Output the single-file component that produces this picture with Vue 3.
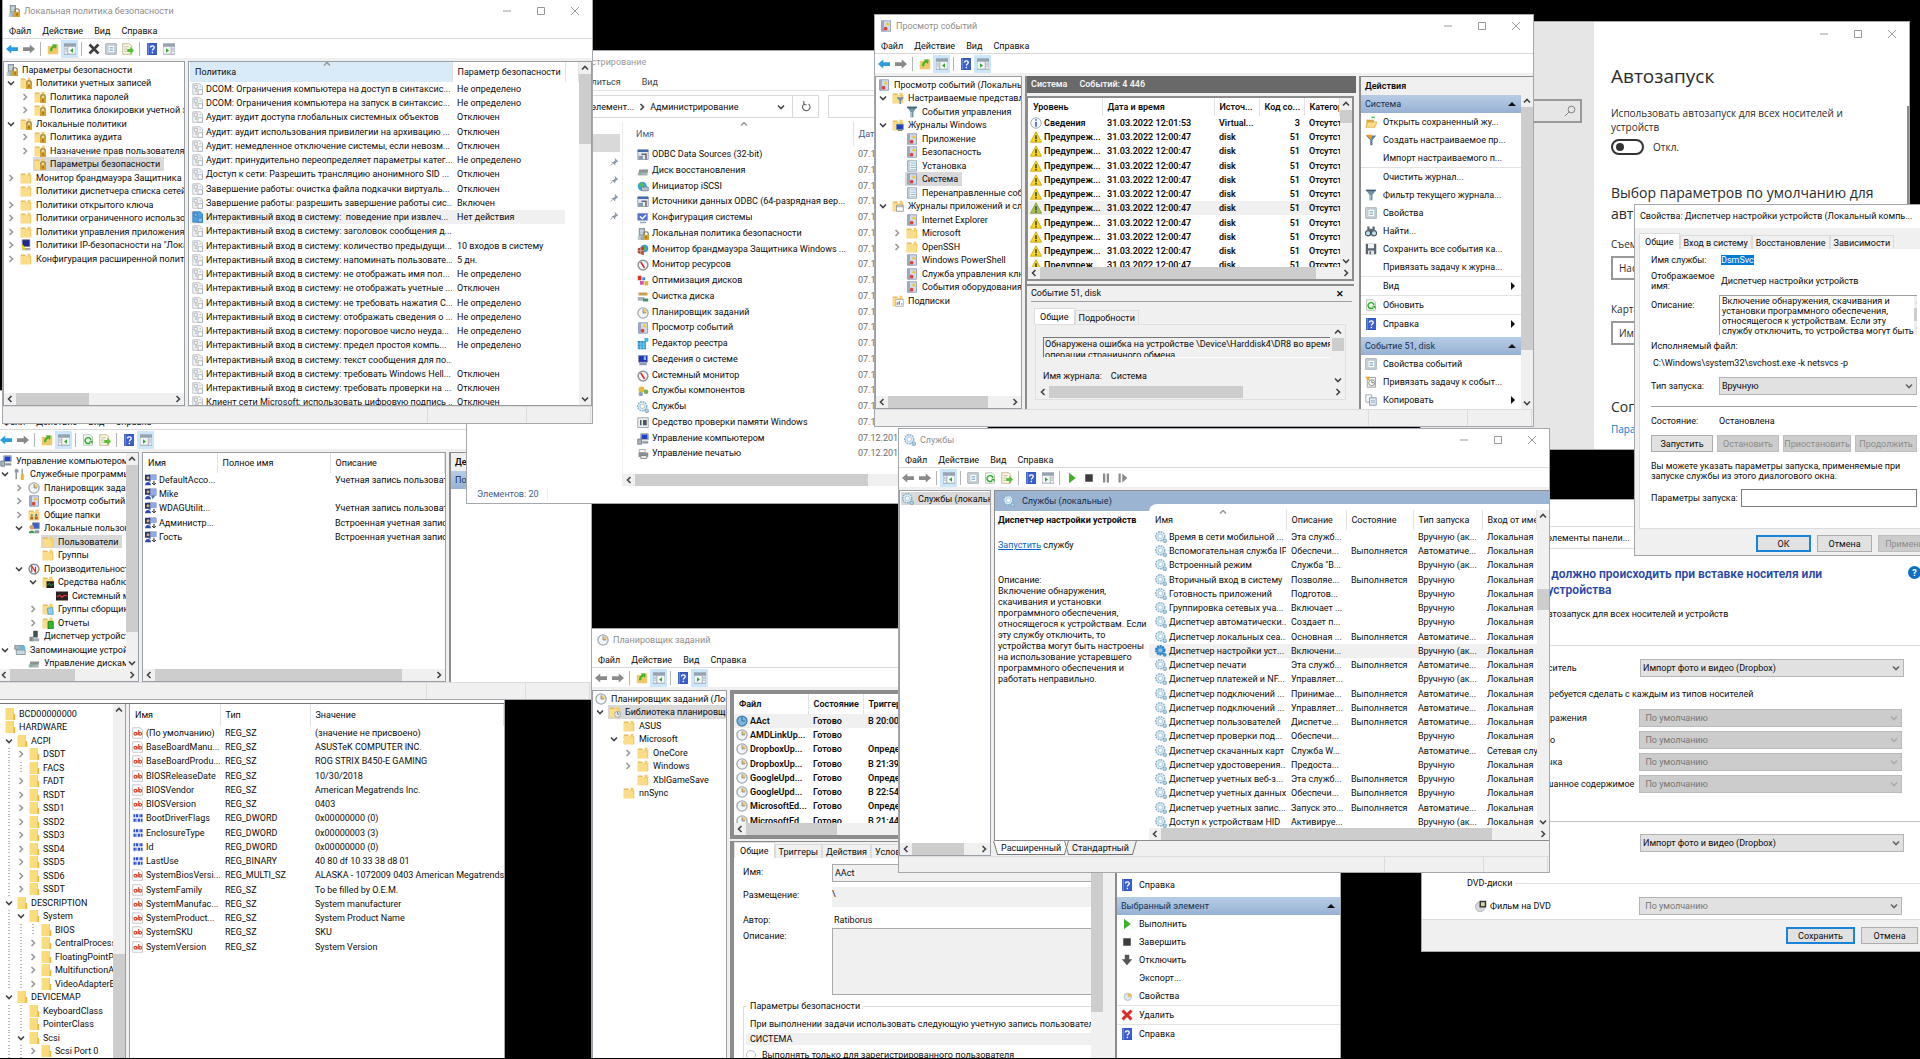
<script setup>
const menu = ['Файл', 'Действие', 'Вид', 'Справка']

// tree rows: [level, icon, text, state] — state: v open, > closed, * selected
const consoles = [
  {
    id: 'computer', title: 'Управление компьютером', icon: 'computer', blue: true,
    tools: ['back', 'fwd', '|', 'up', 'panel*', '|', 'refresh', 'export', '|', 'help', 'panelr*'],
    hthumb: 65, vbar: true,
    tree: [
      [0, 'computer', 'Управление компьютером'],
      [1, 'tools', 'Служебные программы', 'v'],
      [2, 'clock', 'Планировщик заданий', '>'],
      [2, 'log', 'Просмотр событий', '>'],
      [2, 'shared', 'Общие папки', '>'],
      [2, 'users', 'Локальные пользователи', 'v'],
      [3, 'folder', 'Пользователи', '*'],
      [3, 'folder', 'Группы'],
      [2, 'perf', 'Производительность', 'v'],
      [3, 'fmon', 'Средства наблюдения', 'v'],
      [4, 'sysmon', 'Системный монитор'],
      [3, 'fblue', 'Группы сборщиков', '>'],
      [3, 'fgreen', 'Отчеты', '>'],
      [2, 'device', 'Диспетчер устройств'],
      [1, 'storage', 'Запоминающие устройства', 'v'],
      [2, 'disk', 'Управление дисками']
    ]
  },
  {
    id: 'policy', title: 'Локальная политика безопасности', icon: 'server', blue: true, caption: true,
    tools: ['back', 'fwd', '|', 'up', 'panel*', '|', 'cross', 'props', 'export', '|', 'help', 'panelr'],
    hthumb: 73,
    tree: [
      [0, 'server', 'Параметры безопасности'],
      [1, 'flock', 'Политики учетных записей', 'v'],
      [2, 'flock', 'Политика паролей', '>'],
      [2, 'flock', 'Политика блокировки учетной записи', '>'],
      [1, 'flock', 'Локальные политики', 'v'],
      [2, 'flock', 'Политика аудита', '>'],
      [2, 'flock', 'Назначение прав пользователя', '>'],
      [2, 'flock', 'Параметры безопасности', '*'],
      [1, 'folder', 'Монитор брандмауэра Защитника Windows', '>'],
      [1, 'folder', 'Политики диспетчера списка сетей'],
      [1, 'folder', 'Политики открытого ключа', '>'],
      [1, 'folder', 'Политики ограниченного использования', '>'],
      [1, 'folder', 'Политики управления приложениями', '>'],
      [1, 'ipsec', 'Политики IP-безопасности на "Локальный', '>'],
      [1, 'folder', 'Конфигурация расширенной политики', '>']
    ]
  },
  {
    id: 'scheduler', title: 'Планировщик заданий', icon: 'clock',
    tools: ['back', 'fwd', '|', 'up', 'panel*', '|', 'help', 'panelr*'],
    tree: [
      [0, 'clock', 'Планировщик заданий (Локальный)'],
      [1, 'fclock', 'Библиотека планировщика', 'v*'],
      [2, 'folder', 'ASUS'],
      [2, 'folder', 'Microsoft', 'v'],
      [3, 'folder', 'OneCore', '>'],
      [3, 'folder', 'Windows', '>'],
      [3, 'folder', 'XblGameSave'],
      [2, 'folder', 'nnSync']
    ]
  },
  {
    id: 'events', title: 'Просмотр событий', icon: 'log', blue: true, caption: true,
    tools: ['back', 'fwd', '|', 'up', 'panel*', '|', 'help', 'panelr*'],
    hthumb: 100,
    tree: [
      [0, 'log', 'Просмотр событий (Локальный)'],
      [1, 'ffunnel', 'Настраиваемые представления', 'v'],
      [2, 'funnel', 'События управления'],
      [1, 'fwin', 'Журналы Windows', 'v'],
      [2, 'log', 'Приложение'],
      [2, 'log', 'Безопасность'],
      [2, 'logp', 'Установка'],
      [2, 'log', 'Система', '*'],
      [2, 'logp', 'Перенаправленные события'],
      [1, 'fpage', 'Журналы приложений и служб', 'v'],
      [2, 'log', 'Internet Explorer'],
      [2, 'folder', 'Microsoft', '>'],
      [2, 'folder', 'OpenSSH', '>'],
      [2, 'log', 'Windows PowerShell'],
      [2, 'log', 'Служба управления ключами'],
      [2, 'log', 'События оборудования'],
      [1, 'fsub', 'Подписки']
    ]
  },
  {
    id: 'services', title: 'Службы', icon: 'gear', caption: true,
    tools: ['back', 'fwd', '|', 'panel*', '|', 'props', 'refresh', 'export', '|', 'help', 'panelr', '|', 'play', 'stop', 'pause', 'restart'],
    hthumb: 52,
    tree: [[0, 'gear', 'Службы (локальные)', '*']]
  }
]

const login = 'Интерактивный вход в систему: '
const policies = [
  ['DCOM: Ограничения компьютера на доступ в синтаксис...', 'Не определено'],
  ['DCOM: Ограничения компьютера на запуск в синтаксис...', 'Не определено'],
  ['Аудит: аудит доступа глобальных системных объектов', 'Отключен'],
  ['Аудит: аудит использования привилегии на архивацию ...', 'Отключен'],
  ['Аудит: немедленное отключение системы, если невозм...', 'Отключен'],
  ['Аудит: принудительно переопределяет параметры катег...', 'Не определено'],
  ['Доступ к сети: Разрешить трансляцию анонимного SID ...', 'Отключен'],
  ['Завершение работы: очистка файла подкачки виртуаль...', 'Отключен'],
  ['Завершение работы: разрешить завершение работы сис...', 'Включен'],
  [login + '\u00a0поведение при извлеч...', 'Нет действия', true],
  [login + 'заголовок сообщения д...', ''],
  [login + 'количество предыдущи...', '10 входов в систему'],
  [login + 'напоминать пользовате...', '5 дн.'],
  [login + 'не отображать имя пол...', 'Не определено'],
  [login + 'не отображать учетные ...', 'Отключен'],
  [login + 'не требовать нажатия C...', 'Не определено'],
  [login + 'отображать сведения о ...', 'Не определено'],
  [login + 'пороговое число неуда...', 'Не определено'],
  [login + 'предел простоя компь...', 'Не определено'],
  [login + 'текст сообщения для по...', ''],
  [login + 'требовать Windows Hell...', 'Отключен'],
  [login + 'требовать проверки на ...', 'Отключен'],
  ['Клиент сети Microsoft: использовать цифровую подпись ...', 'Отключен']
]

const accounts = [
  ['userd', 'DefaultAcco...', 'Учетная запись пользователя'],
  ['user', 'Mike', ''],
  ['userd', 'WDAGUtilit...', 'Учетная запись пользователя'],
  ['userd', 'Администр...', 'Встроенная учетная запись'],
  ['userd', 'Гость', 'Встроенная учетная запись']
]

const adminTools = [
  ['odbc', 'ODBC Data Sources (32-bit)'],
  ['disk', 'Диск восстановления'],
  ['globe', 'Инициатор iSCSI'],
  ['odbc', 'Источники данных ODBC (64-разрядная вер...'],
  ['monitor', 'Конфигурация системы'],
  ['server', 'Локальная политика безопасности'],
  ['firewall', 'Монитор брандмауэра Защитника Windows ...'],
  ['gauge', 'Монитор ресурсов'],
  ['defrag', 'Оптимизация дисков'],
  ['clean', 'Очистка диска'],
  ['clock', 'Планировщик заданий'],
  ['log', 'Просмотр событий'],
  ['registry', 'Редактор реестра'],
  ['sysinfo', 'Сведения о системе'],
  ['gauge', 'Системный монитор'],
  ['parts', 'Службы компонентов'],
  ['gear', 'Службы'],
  ['memory', 'Средство проверки памяти Windows'],
  ['computer', 'Управление компьютером'],
  ['print', 'Управление печатью']
]

const events = [['info', 'Сведения', '31.03.2022 12:01:53', 'Virtual...', '3']]
for (let i = 1; i < 11; i++) {
  events.push([i === 6 ? 'warng' : 'warn', 'Предупреж...', '31.03.2022 12:00:47', 'disk', '51', i === 6])
}

const eventActions = [
  ['open', 'Открыть сохраненный жу...'],
  ['funnelo', 'Создать настраиваемое пр...'],
  ['', 'Импорт настраиваемого п...', 's'],
  ['', 'Очистить журнал...'],
  ['funnel', 'Фильтр текущего журнала...'],
  ['props', 'Свойства'],
  ['find', 'Найти...'],
  ['save', 'Сохранить все события ка...'],
  ['', 'Привязать задачу к журна...', 's'],
  ['', 'Вид', 's>'],
  ['refresh', 'Обновить', 's'],
  ['help', 'Справка', '>']
]
const diskActions = [
  ['props', 'Свойства событий'],
  ['task', 'Привязать задачу к событ...'],
  ['copy', 'Копировать', '>']
]
const taskActions = [
  ['play', 'Выполнить'],
  ['stop', 'Завершить'],
  ['down', 'Отключить'],
  ['', 'Экспорт...'],
  ['clockp', 'Свойства', 's'],
  ['redx', 'Удалить', 's'],
  ['help', 'Справка']
]

const R = 'Выполняется'
const L = 'Локальная'
const services = [
  ['Время в сети мобильной ...', 'Эта служб...', '', 'Вручную (ак...', L],
  ['Вспомогательная служба IP', 'Обеспечи...', R, 'Автоматиче...', L],
  ['Встроенный режим', 'Служба "В...', '', 'Вручную (ак...', L],
  ['Вторичный вход в систему', 'Позволяе...', R, 'Вручную', L],
  ['Готовность приложений', 'Подготов...', '', 'Вручную', L],
  ['Группировка сетевых уча...', 'Включает ...', '', 'Вручную', L],
  ['Диспетчер автоматически...', 'Создает п...', '', 'Вручную', L],
  ['Диспетчер локальных сеа...', 'Основная ...', R, 'Автоматиче...', L],
  ['Диспетчер настройки уст...', 'Включени...', '', 'Вручную (ак...', L, true],
  ['Диспетчер печати', 'Эта служб...', R, 'Автоматиче...', L],
  ['Диспетчер платежей и NF...', 'Управляет...', '', 'Вручную (ак...', L],
  ['Диспетчер подключений ...', 'Принимае...', R, 'Автоматиче...', L],
  ['Диспетчер подключений ...', 'Управляет...', R, 'Автоматиче...', L],
  ['Диспетчер пользователей', 'Диспетче...', R, 'Автоматиче...', L],
  ['Диспетчер проверки под...', 'Обеспечи...', '', 'Вручную', L],
  ['Диспетчер скачанных карт', 'Служба W...', '', 'Автоматиче...', 'Сетевая служба'],
  ['Диспетчер удостоверения...', 'Предоста...', '', 'Вручную', L],
  ['Диспетчер учетных веб-з...', 'Эта служб...', R, 'Вручную', L],
  ['Диспетчер учетных данных', 'Обеспечи...', R, 'Вручную', L],
  ['Диспетчер учетных запис...', 'Запуск это...', R, 'Автоматиче...', L],
  ['Доступ к устройствам HID', 'Активируе...', '', 'Вручную (ак...', L]
]

const tasks = [
  ['AAct', 'В 20:00', true],
  ['AMDLinkUp...', ''],
  ['DropboxUp...', 'Определено'],
  ['DropboxUp...', 'В 21:39'],
  ['GoogleUpd...', 'Определено'],
  ['GoogleUpd...', 'В 22:54'],
  ['MicrosoftEd...', 'Определено'],
  ['MicrosoftEd...', 'В 21:44']
]

const keys = [
  [0, 'BCD00000000'], [0, 'HARDWARE'], [1, 'ACPI', 'v'], [2, 'DSDT', '>'], [2, 'FACS'], [2, 'FADT', '>'],
  [2, 'RSDT', '>'], [2, 'SSD1', '>'], [2, 'SSD2', '>'], [2, 'SSD3', '>'], [2, 'SSD4', '>'], [2, 'SSD5', '>'],
  [2, 'SSD6', '>'], [2, 'SSDT', '>'], [1, 'DESCRIPTION', 'v'], [2, 'System', 'v'], [3, 'BIOS'],
  [3, 'CentralProcessor', '>'], [3, 'FloatingPointProcessor', '>'], [3, 'MultifunctionAdapter', '>'],
  [3, 'VideoAdapterBusses', '>'], [1, 'DEVICEMAP', 'v'], [2, 'KeyboardClass'], [2, 'PointerClass'],
  [2, 'Scsi', 'v'], [3, 'Scsi Port 0', '>']
]
const values = [
  ['(По умолчанию)', 'REG_SZ', '(значение не присвоено)'],
  ['BaseBoardManu...', 'REG_SZ', 'ASUSTeK COMPUTER INC.'],
  ['BaseBoardProdu...', 'REG_SZ', 'ROG STRIX B450-E GAMING'],
  ['BIOSReleaseDate', 'REG_SZ', '10/30/2018'],
  ['BIOSVendor', 'REG_SZ', 'American Megatrends Inc.'],
  ['BIOSVersion', 'REG_SZ', '0403'],
  ['BootDriverFlags', 'REG_DWORD', '0x00000000 (0)'],
  ['EnclosureType', 'REG_DWORD', '0x00000003 (3)'],
  ['Id', 'REG_DWORD', '0x00000000 (0)'],
  ['LastUse', 'REG_BINARY', '40 80 df 10 33 38 d8 01'],
  ['SystemBiosVersi...', 'REG_MULTI_SZ', 'ALASKA - 1072009 0403 American Megatrends'],
  ['SystemFamily', 'REG_SZ', 'To be filled by O.E.M.'],
  ['SystemManufac...', 'REG_SZ', 'System manufacturer'],
  ['SystemProduct...', 'REG_SZ', 'System Product Name'],
  ['SystemSKU', 'REG_SZ', 'SKU'],
  ['SystemVersion', 'REG_SZ', 'System Version']
]
const isBinary = (type) => type === 'REG_DWORD' || type === 'REG_BINARY'

const media = ['Изображения', 'Видео', 'Музыка', 'Смешанное содержимое']
</script>

<template>
  <main class="desktop">
    <svg class="sprite" aria-hidden="true">
      <defs>
        <symbol id="folder" viewBox="0 0 16 16"><path d="M1 2h6l1 2h7v11H1z" fill="#e8bd55" /><path d="M1 4h13v11H1z" fill="#fbdd88" /><path d="M10 1h4v5h-4z" fill="#f3cd6d" /></symbol>
        <symbol id="rfolder" viewBox="0 0 16 16"><path d="M2 0h11v16H2z" fill="#fbdc7c" /><path d="M12 8h3v8h-3z" fill="#e8b945" /><path d="M12 0h1v16h-1z" fill="#f0cb62" /></symbol>
        <symbol id="lock" viewBox="0 0 16 16"><path d="M9 10V8a3 3 0 0 1 6 0v2" fill="none" stroke="#8a7a50" stroke-width="1.5" /><path d="M8 9h8v7H8z" fill="#d9a22c" /><path d="M11 11h2v3h-2z" fill="#8d6a1c" /></symbol>
        <symbol id="flock" viewBox="0 0 16 16"><use href="#folder" /><use href="#lock" /></symbol>
        <symbol id="fclock" viewBox="0 0 16 16"><use href="#folder" /><circle cx="11.500" cy="11" r="4" fill="#e6edf2" stroke="#8a98a3" /><path d="M11.500 8v3h2" stroke="#555" fill="none" /></symbol>
        <symbol id="fmon" viewBox="0 0 16 16"><use href="#folder" /><path d="M6 7h10v9H6z" fill="#222" /><path d="M7 12l3-2 2 3 3-3" stroke="#3c6" fill="none" /></symbol>
        <symbol id="fblue" viewBox="0 0 16 16"><use href="#folder" /><path d="M7 7l7-1 1 9H8z" fill="#8bcdeb" stroke="#4d9dc4" /></symbol>
        <symbol id="fgreen" viewBox="0 0 16 16"><use href="#folder" /><path d="M8 6h7v10H8z" fill="#2eb82e" stroke="#137a13" /></symbol>
        <symbol id="ffunnel" viewBox="0 0 16 16"><use href="#folder" /><path d="M6 7h10l-4 5v4h-2v-4z" fill="#6e93ad" /></symbol>
        <symbol id="fwin" viewBox="0 0 16 16"><use href="#folder" /><path d="M6 7h9v7H6z" fill="#1a3fd0" stroke="#789" /><path d="M8 15h6v1H8z" fill="#567" /></symbol>
        <symbol id="fpage" viewBox="0 0 16 16"><use href="#folder" /><path d="M6 7h9v8H6z" fill="#fff" stroke="#888" /><path d="M6 9h9" stroke="#888" /></symbol>
        <symbol id="fsub" viewBox="0 0 16 16"><use href="#folder" /><path d="M5 6h10v9H5z" fill="#fff" stroke="#9ab" /><path d="M7 13v-3M10 13V8M13 13v-2" stroke="#d33" /><path d="M8 13V9" stroke="#36c" /></symbol>
        <symbol id="shared" viewBox="0 0 16 16"><use href="#folder" /><circle cx="5" cy="8" r="1.500" fill="#5a6" /><circle cx="11" cy="8" r="1.500" fill="#468" /><path d="M3 14v-4h4v4zM9 14v-4h4v4z" fill="#a86b3a" /></symbol>
        <symbol id="server" viewBox="0 0 16 16"><path d="M3 0h7v15H3z" fill="#9fb0bd" stroke="#6d7d8a" /><path d="M4 3h5M4 5h5M4 7h5" stroke="#e5edf2" /><path d="M1 11h4v5H1z" fill="#b9c7d1" /><use href="#lock" /></symbol>
        <symbol id="ipsec" viewBox="0 0 16 16"><path d="M3 1h10v9H3z" fill="#1d2a8c" stroke="#777" /><path d="M3 12h11v3H3z" fill="#aaa" /><path d="M2 6l4 4 1 5-4-2z" fill="#e6d21c" /></symbol>
        <symbol id="computer" viewBox="0 0 16 16"><path d="M5 1h10v8H5z" fill="#d5dde6" stroke="#7b8894" /><path d="M6 2h8v6H6z" fill="#2142c7" /><path d="M1 8h5v7H1z" fill="#a9b4be" stroke="#68737d" /><path d="M7 11h8v3H7z" fill="#8a95a0" /></symbol>
        <symbol id="monitor" viewBox="0 0 16 16"><path d="M1 2h13v9H1z" fill="#4d6fd6" stroke="#8793b5" /><path d="M4 6l3 3 5-5" stroke="#fff" stroke-width="2" fill="none" /><path d="M4 13h8v2H4z" fill="#9aa4b5" /></symbol>
        <symbol id="sysinfo" viewBox="0 0 16 16"><path d="M2 2h12v9H2z" fill="#2437b8" stroke="#8793b5" /><path d="M9 3h3v5H9z" fill="#8fb0ff" /><path d="M3 12h10v3H3z" fill="#8d9ab0" /></symbol>
        <symbol id="tools" viewBox="0 0 16 16"><path d="M3 1v14M2 2v3h3V2" stroke="#8d98a1" stroke-width="2" fill="none" /><path d="M11 1v7" stroke="#9ba7b0" stroke-width="2" /><path d="M9 8h4v8H9z" fill="#e9b52b" /></symbol>
        <symbol id="clock" viewBox="0 0 16 16"><circle cx="8" cy="8" r="6.800" fill="#f2f6f8" stroke="#a3abb2" stroke-width="1.800" /><path d="M8 8V3a5 5 0 0 1 5 5z" fill="#efc46b" /><path d="M8 3v5h4" stroke="#6b7d8a" fill="none" /></symbol>
        <symbol id="clockb" viewBox="0 0 16 16"><circle cx="8" cy="8" r="6.500" fill="#7db7e0" stroke="#4c86b5" stroke-width="2" /><path d="M8 3v5h4" stroke="#23557d" fill="none" /></symbol>
        <symbol id="clockp" viewBox="0 0 16 16"><circle cx="9" cy="9" r="5" fill="#dbe7ee" stroke="#a9b8c2" /><path d="M9 9V4a5 5 0 0 1 5 5z" fill="#e7ba5c" /></symbol>
        <symbol id="log" viewBox="0 0 16 16"><path d="M2 1h12v14H2z" fill="#d3dbe8" stroke="#7f8dae" /><path d="M3 1h2v14H3z" fill="#8c98b6" /><path d="M10 2l3 5H8z" fill="#f2c818" /><circle cx="7.500" cy="11.500" r="2.500" fill="#d8453a" /></symbol>
        <symbol id="logp" viewBox="0 0 16 16"><path d="M2 1h12v14H2z" fill="#eef5fa" stroke="#7b97ab" /><path d="M4 1v14" stroke="#7b97ab" /><path d="M6 4h7M6 7h7M6 10h7M6 13h7" stroke="#86aac2" /></symbol>
        <symbol id="users" viewBox="0 0 16 16"><path d="M6 1h9v8H6z" fill="#3560cc" stroke="#889" /><circle cx="5" cy="7" r="3" fill="#d9a066" /><path d="M1 15c0-5 8-5 8 0z" fill="#3e9b4f" /><path d="M9 11h6v4H9z" fill="#8d98a5" /></symbol>
        <symbol id="user" viewBox="0 0 16 16"><path d="M5 1h10v9H5z" fill="#8facea" stroke="#99a" /><path d="M0 1h7v8H0z" fill="#2b366b" /><circle cx="4" cy="5" r="2" fill="#d9a97c" /><path d="M0 15c0-6 8-6 8 0z" fill="#2a4bb3" /><path d="M8 10h6l-4 5z" fill="#5675b5" /></symbol>
        <symbol id="userd" viewBox="0 0 16 16"><use href="#user" /><path d="M8 8h8v8H8z" fill="#fff" /><path d="M12 9v5M9.500 12l2.500 2.500 2.500-2.500" stroke="#222" fill="none" stroke-width="1.300" /></symbol>
        <symbol id="perf" viewBox="0 0 16 16"><circle cx="8" cy="8" r="6.500" fill="#f7f7f7" stroke="#8d8d8d" stroke-width="2" /><path d="M5 12V4l5 8V5" stroke="#d32a2a" stroke-width="1.500" fill="none" /></symbol>
        <symbol id="gauge" viewBox="0 0 16 16"><circle cx="8" cy="8" r="6.500" fill="#f4f6f8" stroke="#8d959c" stroke-width="2" /><path d="M5 4l5 8" stroke="#d32a2a" stroke-width="2" /></symbol>
        <symbol id="sysmon" viewBox="0 0 16 16"><path d="M0 2h16v12H0z" fill="#2a2124" /><path d="M1 9l4-2 3 3 3-3 4 1" stroke="#e03b3b" stroke-width="1.500" fill="none" /></symbol>
        <symbol id="device" viewBox="0 0 16 16"><path d="M7 1h6v9H7z" fill="#44514a" /><path d="M2 9h5v6H2z" fill="#7f8a90" /><path d="M6 11h9v4H6z" fill="#a5adb2" /></symbol>
        <symbol id="storage" viewBox="0 0 16 16"><path d="M1 2h12v5H1z" fill="#aeb9c2" stroke="#72808b" /><path d="M3 8h12v6H3z" fill="#cdd6dd" stroke="#72808b" /><path d="M7 3h8v5H7z" fill="#6bb6dd" /></symbol>
        <symbol id="disk" viewBox="0 0 16 16"><path d="M3 6h12l-1 5H2z" fill="#8b938e" /><path d="M1 10h13v4H1z" fill="#abb3b6" /><path d="M3 11h3v2H3z" fill="#4c6" /></symbol>
        <symbol id="odbc" viewBox="0 0 16 16"><path d="M1 1h14v13H1z" fill="#e3e9f0" stroke="#8493a6" /><path d="M1 1h14v3H1z" fill="#3d6ea8" /><path d="M6 7h6v7" stroke="#667" stroke-width="2" fill="none" /><path d="M2 9h6v5H2z" fill="#8798a8" /></symbol>
        <symbol id="globe" viewBox="0 0 16 16"><circle cx="7" cy="7" r="6" fill="#3aa0dd" /><path d="M2 4l5-2 3 4-5 3z" fill="#57bb5a" /><path d="M6 8h9v5H6z" fill="#b7c4cf" stroke="#66788a" /></symbol>
        <symbol id="firewall" viewBox="0 0 16 16"><circle cx="10" cy="6" r="5" fill="#3a9bd5" /><path d="M9 2l4 4-3 3z" fill="#56b857" /><path d="M1 6l8-3v12l-8-3z" fill="#a8442f" /><path d="M1 9h8M5 5v9" stroke="#e6c1b4" /></symbol>
        <symbol id="defrag" viewBox="0 0 16 16"><path d="M1 1h5v6H1z" fill="#d8322b" /><path d="M7 3h4v4H7z" fill="#3c8ee0" /><path d="M4 8h5v5H4z" fill="#d94fb0" /><path d="M10 8h5v6h-5z" fill="#e3b23a" /></symbol>
        <symbol id="clean" viewBox="0 0 16 16"><path d="M2 2h12v4H2z" fill="#c7a049" /><path d="M1 8h9v5H1z" fill="#a9b5be" /><path d="M8 10h7v4H8z" fill="#4f8f6a" /></symbol>
        <symbol id="registry" viewBox="0 0 16 16"><path d="M1 4h11v11H1z" fill="#2a93c9" /><path d="M5 4v11M1 8h11M9 4v11M1 12h11" stroke="#9bd6f2" /><path d="M10 0h5v5h-5z" fill="#45b4ea" /></symbol>
        <symbol id="parts" viewBox="0 0 16 16"><circle cx="6" cy="6" r="4" fill="#e7ba3b" /><circle cx="12" cy="9" r="3" fill="#6fae52" /><circle cx="5" cy="12" r="3" fill="#8ea4ba" /></symbol>
        <symbol id="gear" viewBox="0 0 16 16"><circle cx="7" cy="7" r="6" fill="#e3f0f7" stroke="#8ab4cd" stroke-width="2" stroke-dasharray="2.500 1" /><circle cx="7" cy="7" r="3" fill="#fff" stroke="#8db8d1" /><circle cx="13" cy="13" r="2.500" fill="#b4d2e4" stroke="#6b9cba" /></symbol>
        <symbol id="gearb" viewBox="0 0 16 16"><circle cx="7" cy="7" r="5.500" fill="#4ca0dc" stroke="#2a7fc0" stroke-width="3" stroke-dasharray="2.500 1" /><circle cx="7" cy="7" r="2.500" fill="#8fc5ec" /><circle cx="13" cy="13" r="2.500" fill="#4294d2" /></symbol>
        <symbol id="memory" viewBox="0 0 16 16"><path d="M1 1h14v13H1z" fill="#eceff2" stroke="#8b949c" /><path d="M4 4h2v7H4zM8 4h5v7H8z" fill="#4d5760" /></symbol>
        <symbol id="print" viewBox="0 0 16 16"><path d="M3 2h8v4H3z" fill="#f5f5f5" stroke="#999" /><path d="M2 6h13v6H2z" fill="#8b8f94" /><path d="M5 10h8v4H5z" fill="#e8e8e8" stroke="#777" /></symbol>
        <symbol id="funnel" viewBox="0 0 16 16"><path d="M1 1h14l-5 7v7H6V8z" fill="#7294ab" /><path d="M1 1h14l-1 2H2z" fill="#3f6078" /><path d="M6 8h2v7H6z" fill="#a8c1d2" /></symbol>
        <symbol id="funnelo" viewBox="0 0 16 16"><path d="M1 2h14l-5 6v7H7V8z" fill="#5f7f96" /><path d="M1 1h8v7z" fill="#f39a1f" /></symbol>
        <symbol id="info" viewBox="0 0 16 16"><circle cx="8" cy="8" r="7" fill="#f5f8fb" stroke="#8a949e" /><path d="M8 3v2M8 6.500V13" stroke="#2b55c4" stroke-width="2" /></symbol>
        <symbol id="warn" viewBox="0 0 16 16"><path d="M8 1l7.500 14H.5z" fill="#f9d71c" stroke="#c4a008" /><path d="M8 5.500V11M8 12v2" stroke="#222" stroke-width="1.800" /></symbol>
        <symbol id="warng" viewBox="0 0 16 16"><path d="M8 1l7.500 14H.5z" fill="#a9be4d" stroke="#7b9440" /><path d="M8 5.500V11M8 12v2" stroke="#1c3b4a" stroke-width="1.800" /></symbol>
        <symbol id="page" viewBox="0 0 16 16"><path d="M1 1h10l3 3v11H1z" fill="#f1f3f5" stroke="#b0b4b9" /><path d="M3 3h4v4H3zM8 9h6v6H8z" fill="#fff" stroke="#9da4ac" /><path d="M4 9h3M4 11h3M10 5h2" stroke="#9aa" /></symbol>
        <symbol id="pageb" viewBox="0 0 16 16"><path d="M1 1h10l3 3v11H1z" fill="#4da0de" stroke="#3179b5" /><path d="M3 3h4v4H3zM8 9h6v6H8z" fill="#79bbee" stroke="#2d72ad" /></symbol>
        <symbol id="ab" viewBox="0 0 16 16"><path d="M1 1h10l3 3v11H1z" fill="#fff" stroke="#b5b5b5" /><g fill="none" stroke="#d9452c" stroke-width="1.500"><circle cx="4.500" cy="9" r="1.800" /><path d="M6.800 7v4M9 4v7" /><circle cx="11" cy="9" r="1.800" /></g></symbol>
        <symbol id="bin" viewBox="0 0 16 16"><path d="M1 2h14v12H1z" fill="#eef2ff" /><path d="M2 3h2v4H2zM5 3h3v4H5zM9 3h1v4H9zM11 3h3v4h-3zM2 9h3v4H2zM6 9h1v4H6zM8 9h3v4H8zM12 9h2v4h-2z" fill="#2a50d4" /></symbol>
        <symbol id="back" viewBox="0 0 16 16"><path d="M0 8l7-6v3.500h9v5H7V14z" fill="currentColor" /></symbol>
        <symbol id="fwd" viewBox="0 0 16 16"><path d="M16 8L9 2v3.500H0v5h9V14z" fill="#8a8a8a" /></symbol>
        <symbol id="up" viewBox="0 0 16 16"><path d="M1 4h6l1-2h7v13H1z" fill="#f2c96a" /><path d="M4 11c0-4 1-6 4-7L6 2l7 0-1 6-2-2c-2 1-3 2-3 5z" fill="#46b32e" /></symbol>
        <symbol id="panel" viewBox="0 0 16 16"><path d="M0 1h16v14H0z" fill="#f3f6f9" stroke="#8b97a3" /><path d="M0 1h16v4H0z" fill="#96a3b0" /><path d="M5 5v10" stroke="#8b97a3" /><path d="M1 7h3M1 9h3M1 11h3" stroke="#aab" /><path d="M12 7v6l-4-3z" fill="#35a52b" /></symbol>
        <symbol id="panelr" viewBox="0 0 16 16"><path d="M0 1h16v14H0z" fill="#f3f6f9" stroke="#8b97a3" /><path d="M0 1h16v4H0z" fill="#96a3b0" /><path d="M11 5v10" stroke="#8b97a3" /><path d="M12 7h3M12 9h3M12 11h3" stroke="#aab" /><path d="M4 7v6l4-3z" fill="#35a52b" /></symbol>
        <symbol id="cross" viewBox="0 0 16 16"><path d="M2 2l12 12M14 2L2 14" stroke="#3d3d3d" stroke-width="3.500" /></symbol>
        <symbol id="redx" viewBox="0 0 16 16"><path d="M2 2l12 12M14 2L2 14" stroke="#e02a24" stroke-width="4" /></symbol>
        <symbol id="props" viewBox="0 0 16 16"><path d="M1 1h14v14H1z" fill="#d5dde3" stroke="#8794a0" /><path d="M4 3h9v10H4z" fill="#fff" stroke="#a9b5bd" /><path d="M6 6h5M6 8h5M6 10h5" stroke="#6fa6cc" /></symbol>
        <symbol id="export" viewBox="0 0 16 16"><path d="M1 1h9l3 3v11H1z" fill="#fdf8e2" stroke="#b2a878" /><path d="M3 5h6M3 8h4M3 11h4" stroke="#a9a9a9" /><path d="M7 8h4V5l5 5-5 5v-3H7z" fill="#55c233" /></symbol>
        <symbol id="refresh" viewBox="0 0 16 16"><path d="M2 1h9l3 3v11H2z" fill="#f6faf5" stroke="#a9b5a6" /><path d="M11 11.500A4 4 0 1 1 12 8" stroke="#2fae2f" stroke-width="2" fill="none" /><path d="M9 9h5v4z" fill="#2fae2f" /></symbol>
        <symbol id="help" viewBox="0 0 16 16"><path d="M2 0h12v16H2z" fill="#3a5fd0" stroke="#22409c" /><path d="M3 0v16" stroke="#8aa3ef" /><path d="M6 6c0-3 5-3 5 0 0 2-2.500 2-2.500 4M8.500 11.500v2" stroke="#fff" stroke-width="1.800" fill="none" /></symbol>
        <symbol id="play" viewBox="0 0 16 16"><path d="M4 1l9 7-9 7z" fill="#3fb02b" /></symbol>
        <symbol id="stop" viewBox="0 0 16 16"><path d="M3 3h10v10H3z" fill="#3c3c3c" /></symbol>
        <symbol id="pause" viewBox="0 0 16 16"><path d="M4 2h3v12H4zM9 2h3v12H9z" fill="#8c8c8c" /></symbol>
        <symbol id="restart" viewBox="0 0 16 16"><path d="M2 2h3v12H2z" fill="#8c8c8c" /><path d="M7 2l7 6-7 6z" fill="#8c8c8c" /></symbol>
        <symbol id="down" viewBox="0 0 16 16"><path d="M5 1h6v6h4l-7 8-7-8h4z" fill="#565656" /></symbol>
        <symbol id="open" viewBox="0 0 16 16"><path d="M2 5h10v9H2z" fill="#dba83c" /><path d="M4 8h12l-3 7H1z" fill="#fbdd88" stroke="#d9a93f" /><path d="M9 3c1-2 3-2 4 0" stroke="#4b4" stroke-width="1.500" fill="none" /></symbol>
        <symbol id="find" viewBox="0 0 16 16"><path d="M3 2h3v5H3zM10 2h3v5h-3zM6 5h4v4H6z" fill="#5f6b74" /><circle cx="4" cy="11" r="3.500" fill="#bfe0f5" stroke="#4b5760" stroke-width="1.500" /><circle cx="12" cy="11" r="3.500" fill="#bfe0f5" stroke="#4b5760" stroke-width="1.500" /></symbol>
        <symbol id="save" viewBox="0 0 16 16"><path d="M1 1h14v14H1z" fill="#5b6670" /><path d="M4 1h8v6H4z" fill="#f2f4f6" /><path d="M4 10h8v5H4z" fill="#dfe4e8" /><path d="M6 11h2v4H6z" fill="#5b6670" /></symbol>
        <symbol id="task" viewBox="0 0 16 16"><path d="M3 2h11v13H3z" fill="#eceff2" stroke="#8f8f8f" /><circle cx="9" cy="9" r="4" fill="#fff" stroke="#777" /><path d="M9 6v3h3" stroke="#555" fill="none" /><path d="M0 1h6v6z" fill="#f2a629" /></symbol>
        <symbol id="copy" viewBox="0 0 16 16"><path d="M1 1h8v10H1z" fill="#f4f7fa" stroke="#8d9aa8" /><path d="M6 5h9v10H6z" fill="#dfe9f3" stroke="#7387a0" /><path d="M8 9h5M8 11h5" stroke="#8aa5c4" /></symbol>
        <symbol id="dvd" viewBox="0 0 16 16"><circle cx="7" cy="9" r="6.500" fill="#d6d8da" stroke="#a5a8ab" /><path d="M6 1h9v9H6z" fill="#3a3a3a" /><path d="M8 3h5v5H8z" fill="#d9d29a" /></symbol>
        <symbol id="pin" viewBox="0 0 16 16"><path d="M9 1l6 6-2 .5-3 3v3L4 8h3l3-3zM5 10l-4 5 5-4z" fill="#8c98a3" /></symbol>
        <symbol id="search" viewBox="0 0 16 16"><circle cx="10" cy="6" r="4.500" fill="none" stroke="#777" stroke-width="1.200" /><path d="M7 9l-6 6" stroke="#777" stroke-width="1.200" /></symbol>
        <symbol id="reload" viewBox="0 0 16 16"><path d="M11.500 4A5 5 0 1 1 6 3.500" fill="none" stroke="#666" stroke-width="1.500" /><path d="M5 0v5h4" fill="none" stroke="#666" stroke-width="1.500" /></symbol>
        <symbol id="c-l" viewBox="0 0 12 12"><path d="M7.500 3L4.500 6l3 3" fill="none" stroke="currentColor" stroke-width="1.600" /></symbol>
        <symbol id="c-r" viewBox="0 0 12 12"><path d="M4.500 3l3 3-3 3" fill="none" stroke="currentColor" stroke-width="1.600" /></symbol>
        <symbol id="c-u" viewBox="0 0 12 12"><path d="M3 7.500l3-3 3 3" fill="none" stroke="currentColor" stroke-width="1.600" /></symbol>
        <symbol id="c-d" viewBox="0 0 12 12"><path d="M3 4.500l3 3 3-3" fill="none" stroke="currentColor" stroke-width="1.600" /></symbol>
        <symbol id="t-u" viewBox="0 0 12 12"><path d="M2 8l4-4 4 4z" fill="#111" /></symbol>
        <symbol id="t-r" viewBox="0 0 12 12"><path d="M4 2l4 4-4 4z" fill="#111" /></symbol>
        <symbol id="w-min" viewBox="0 0 12 12"><path d="M2 6h8" stroke="#999" /></symbol>
        <symbol id="w-max" viewBox="0 0 12 12"><path d="M2.500 2.500h7v7h-7z" fill="none" stroke="#999" /></symbol>
        <symbol id="w-x" viewBox="0 0 12 12"><path d="M2 2l8 8M10 2l-8 8" stroke="#999" /></symbol>
      </defs>
    </svg>

    <!-- Registry editor -->
    <section class="win registry">
      <div class="reg-path">Компьютер\HKEY_LOCAL_MACHINE\SYSTEM\HardwareConfig\Current</div>
      <div class="reg-body">
        <div class="reg-tree">
          <div class="rows">
            <div v-for="(k, i) in keys" :key="i" class="row">
              <i v-for="n in k[0]" :key="n" class="guide" :class="{ bare: n === k[0] && k[2] }">
                <svg v-if="n === k[0] && k[2]" class="ar" :class="{ dim: k[2] === '>' }"><use :href="k[2] === 'v' ? '#c-d' : '#c-r'" /></svg>
              </i>
              <span class="node"><svg class="ic"><use href="#rfolder" /></svg>{{ k[1] }}</span>
            </div>
          </div>
          <div class="vbar"><svg class="ar"><use href="#c-u" /></svg><i class="thumb reg-thumb"></i></div>
        </div>
        <div class="reg-list">
          <table class="list">
            <colgroup><col class="w90"><col class="w90"><col></colgroup>
            <thead><tr><th>Имя</th><th>Тип</th><th>Значение</th></tr></thead>
            <tbody>
              <tr v-for="v in values" :key="v[0]">
                <td><svg class="ic"><use :href="isBinary(v[1]) ? '#bin' : '#ab'" /></svg>{{ v[0] }}</td>
                <td>{{ v[1] }}</td><td>{{ v[2] }}</td>
              </tr>
            </tbody>
          </table>
        </div>
      </div>
    </section>

    <!-- Autoplay control panel -->
    <section class="win autoplay">
      <div class="ap-address"><span>Все элементы панели...</span><svg class="ar"><use href="#c-r" /></svg></div>
      <div class="ap-page">
        <div class="ap-head">
          <h2>Выберите, что должно происходить при вставке носителя или<br>подключении устройства</h2>
          <button class="ap-help" aria-label="Справка">?</button>
        </div>
        <label class="ap-all"><input type="checkbox">Использовать автозапуск для всех носителей и устройств</label>
        <div class="ap-line top">
          <label class="ap-label" for="ap-usb">Съемный носитель</label>
          <div class="sel"><select id="ap-usb"><option>Импорт фото и видео (Dropbox)</option></select><svg class="ar"><use href="#c-d" /></svg></div>
        </div>
        <p class="ap-note">Выберите, что требуется сделать с каждым из типов носителей</p>
        <div v-for="(m, i) in media" :key="m" class="ap-line sub">
          <label class="ap-label" :for="'ap-' + i">{{ m }}</label>
          <div class="sel off"><select :id="'ap-' + i" disabled><option>По умолчанию</option></select><svg class="ar"><use href="#c-d" /></svg></div>
        </div>
        <div class="ap-line card">
          <label class="ap-label" for="ap-card">Карта памяти</label>
          <div class="sel"><select id="ap-card"><option>Импорт фото и видео (Dropbox)</option></select><svg class="ar"><use href="#c-d" /></svg></div>
        </div>
        <div class="ap-group">DVD-диски</div>
        <div class="ap-line dvd">
          <label class="ap-label" for="ap-dvd"><svg class="ic"><use href="#dvd" /></svg>Фильм на DVD</label>
          <div class="sel pale"><select id="ap-dvd"><option>По умолчанию</option></select><svg class="ar"><use href="#c-d" /></svg></div>
        </div>
        <div class="ap-line dvd">
          <span class="ap-label"></span>
          <div class="sel pale"><select aria-label="DVD"><option>По умолчанию</option></select></div>
        </div>
      </div>
      <footer class="ap-foot"><button class="btn main">Сохранить</button><button class="btn">Отмена</button></footer>
    </section>

    <!-- Settings -->
    <section class="win settings">
      <aside class="set-nav"><label class="set-search"><input type="text" aria-label="Поиск"><svg class="ic"><use href="#search" /></svg></label></aside>
      <div class="set-page">
        <div class="caption"><button v-for="c in ['w-min', 'w-max', 'w-x']" :key="c" :aria-label="c"><svg class="ar"><use :href="'#' + c" /></svg></button></div>
        <h1>Автозапуск</h1>
        <p>Использовать автозапуск для всех носителей и устройств</p>
        <label class="toggle"><input type="checkbox" role="switch"><span>Откл.</span></label>
        <h2>Выбор параметров по умолчанию для автозапуска</h2>
        <label class="field">Съемный носитель<select><option>Настроить</option></select></label>
        <label class="field">Карта памяти<select><option>Импорт</option></select></label>
        <h3>Сопутствующие параметры</h3>
        <a href="#">Параметры</a>
        <i class="set-scroll"></i>
      </div>
    </section>

    <!-- Management consoles, back to front -->
    <section v-for="w in consoles" :key="w.id" class="win mmc" :class="w.id">
      <header class="title">
        <svg class="ic"><use :href="'#' + w.icon" /></svg><span>{{ w.title }}</span>
        <div v-if="w.caption" class="caption"><button v-for="c in ['w-min', 'w-max', 'w-x']" :key="c" :aria-label="c"><svg class="ar"><use :href="'#' + c" /></svg></button></div>
      </header>
      <nav class="menu"><button v-for="m in menu" :key="m">{{ m }}</button></nav>
      <div class="tools" :class="{ blue: w.blue }">
        <template v-for="(t, i) in w.tools" :key="i">
          <i v-if="t === '|'" class="sep"></i>
          <button v-else :class="{ on: t.endsWith('*') }" :aria-label="t"><svg class="ic"><use :href="'#' + t.replace('*', '')" /></svg></button>
        </template>
      </div>
      <div class="body">
        <div class="tree">
          <div class="tree-main">
            <div class="rows">
              <div v-for="(n, i) in w.tree" :key="i" class="row">
                <i v-for="k in n[0]" :key="k" class="step">
                  <svg v-if="k === n[0] && n[3] && n[3] !== '*'" class="ar" :class="{ dim: n[3] === '>' }"><use :href="n[3][0] === 'v' ? '#c-d' : '#c-r'" /></svg>
                </i>
                <span class="node" :class="{ picked: n[3] && n[3].includes('*') }"><svg class="ic"><use :href="'#' + n[1]" /></svg>{{ n[2] }}</span>
              </div>
            </div>
            <div v-if="w.vbar" class="vbar"><svg class="ar"><use href="#c-u" /></svg><i class="thumb tree-thumb"></i><svg class="ar end"><use href="#c-d" /></svg></div>
          </div>
          <div v-if="w.hthumb" class="hbar"><svg class="ar"><use href="#c-l" /></svg><i class="thumb" :style="{ width: w.hthumb + 'px' }"></i><svg class="ar end"><use href="#c-r" /></svg></div>
        </div>

        <template v-if="w.id === 'computer'">
          <div class="pane cm-list">
            <table class="list">
              <colgroup><col class="w74"><col class="w113"><col></colgroup>
              <thead><tr><th>Имя</th><th>Полное имя</th><th>Описание</th></tr></thead>
              <tbody>
                <tr v-for="a in accounts" :key="a[1]"><td><svg class="ic"><use :href="'#' + a[0]" /></svg>{{ a[1] }}</td><td></td><td>{{ a[2] }}</td></tr>
              </tbody>
            </table>
            <div class="hbar"><svg class="ar"><use href="#c-l" /></svg><i class="thumb cm-thumb"></i><svg class="ar end"><use href="#c-r" /></svg></div>
          </div>
          <div class="actions"><h4>Действия</h4><div class="band">Пользователи</div></div>
        </template>

        <div v-else-if="w.id === 'policy'" class="pane lp-list">
          <div class="lp-clip">
            <table class="list">
              <colgroup><col class="w262"><col class="w113"><col></colgroup>
              <thead><tr><th class="sorted">Политика<svg class="ar caret"><use href="#c-u" /></svg></th><th>Параметр безопасности</th><th></th></tr></thead>
              <tbody>
                <tr v-for="(p, i) in policies" :key="i" :class="{ hot: p[2] }"><td><svg class="ic"><use :href="p[2] ? '#pageb' : '#page'" /></svg>{{ p[0] }}</td><td>{{ p[1] }}</td><td class="rest"></td></tr>
              </tbody>
            </table>
          </div>
          <div class="vbar"><svg class="ar"><use href="#c-u" /></svg><i class="thumb lp-thumb"></i><svg class="ar end"><use href="#c-d" /></svg></div>
        </div>

        <template v-else-if="w.id === 'scheduler'">
          <div class="ts-mid">
            <div class="ts-list">
              <div class="ts-clip">
                <table class="list strong">
                  <colgroup><col class="w74"><col class="w55"><col></colgroup>
                  <thead><tr><th>Файл</th><th>Состояние</th><th>Триггеры</th></tr></thead>
                  <tbody>
                    <tr v-for="(t, i) in tasks" :key="i" :class="{ hot: t[2] }"><td><svg class="ic"><use :href="t[2] ? '#clockb' : '#clock'" /></svg>{{ t[0] }}</td><td>Готово</td><td>{{ t[1] }}</td></tr>
                  </tbody>
                </table>
              </div>
              <div class="hbar"><svg class="ar"><use href="#c-l" /></svg><i class="thumb ts-thumb"></i></div>
            </div>
            <div class="ts-info">
              <div class="tabs"><button class="cur">Общие</button><button>Триггеры</button><button>Действия</button><button>Условия</button></div>
              <div class="ts-form">
                <div class="ts-fields">
                  <label for="t-name">Имя:</label><input id="t-name" class="t-box" value="AAct" readonly>
                  <label for="t-place">Размещение:</label><input id="t-place" class="t-flat" value="\" readonly>
                  <span>Автор:</span><span class="t-author">Ratiborus</span>
                  <label for="t-desc">Описание:</label><textarea id="t-desc" readonly></textarea>
                  <fieldset>
                    <legend>Параметры безопасности</legend>
                    <p>При выполнении задачи использовать следующую учетную запись пользователя:</p>
                    <p class="account">СИСТЕМА</p>
                    <label class="radio"><input type="radio" name="run">Выполнять только для зарегистрированного пользователя</label>
                  </fieldset>
                </div>
                <div class="vbar"><i class="thumb form-thumb"></i></div>
              </div>
            </div>
          </div>
          <div class="actions ts-actions">
            <button class="act"><svg class="ic"><use href="#help" /></svg><span>Справка</span></button>
            <div class="band">Выбранный элемент<svg class="ar"><use href="#t-u" /></svg></div>
            <button v-for="(a, i) in taskActions" :key="i" class="act" :class="{ line: a[2] }">
              <svg class="ic"><use v-if="a[0]" :href="'#' + a[0]" /></svg><span>{{ a[1] }}</span>
            </button>
          </div>
        </template>

        <template v-else-if="w.id === 'events'">
          <div class="ev-mid">
            <div class="ev-title"><span>Система</span><span>Событий: 4 446</span></div>
            <div class="ev-list">
              <div class="ev-top">
                <div class="ev-clip">
                  <table class="list strong">
                    <colgroup><col class="w74"><col class="w112"><col class="w45"><col class="w45"><col></colgroup>
                    <thead><tr><th>Уровень</th><th>Дата и время</th><th>Источ...</th><th>Код со...</th><th>Категория</th></tr></thead>
                    <tbody>
                      <tr v-for="(e, i) in events" :key="i" :class="{ hot: e[5] }"><td><svg class="ic"><use :href="'#' + e[0]" /></svg>{{ e[1] }}</td><td>{{ e[2] }}</td><td>{{ e[3] }}</td><td class="num">{{ e[4] }}</td><td>Отсутствует</td></tr>
                    </tbody>
                  </table>
                </div>
                <div class="vbar"><svg class="ar"><use href="#c-u" /></svg><i class="thumb ev-thumb"></i><svg class="ar end"><use href="#c-d" /></svg></div>
              </div>
              <div class="hbar"><svg class="ar"><use href="#c-l" /></svg><i class="thumb evh-thumb"></i><svg class="ar end"><use href="#c-r" /></svg></div>
            </div>
            <div class="ev-info">
              <div class="ev-name">Событие 51, disk<button aria-label="Закрыть">✕</button></div>
              <div class="tabs"><button class="cur">Общие</button><button>Подробности</button></div>
              <div class="ev-box">
                <div class="ev-text">
                  <div class="ev-scroll">
                    <div class="ev-msg">Обнаружена ошибка на устройстве \Device\Harddisk4\DR8 во время<br>операции страничного обмена.</div>
                    <p><span>Имя журнала:</span><span>Система</span></p>
                  </div>
                  <div class="vbar"><svg class="ar"><use href="#c-u" /></svg><i class="thumb ev-thumb"></i><svg class="ar end"><use href="#c-d" /></svg></div>
                </div>
                <div class="hbar"><svg class="ar"><use href="#c-l" /></svg><i class="thumb evt-thumb"></i><svg class="ar end"><use href="#c-r" /></svg></div>
              </div>
            </div>
          </div>
          <div class="actions ev-actions">
            <h4>Действия</h4>
            <div class="act-row">
              <div class="act-list">
                <div class="band">Система<svg class="ar"><use href="#t-u" /></svg></div>
                <button v-for="(a, i) in eventActions" :key="i" class="act" :class="{ line: a[2] && a[2].includes('s') }">
                  <svg class="ic"><use v-if="a[0]" :href="'#' + a[0]" /></svg><span>{{ a[1] }}</span>
                  <svg v-if="a[2] && a[2].includes('>')" class="ar"><use href="#t-r" /></svg>
                </button>
                <div class="band">Событие 51, disk<svg class="ar"><use href="#t-u" /></svg></div>
                <button v-for="(a, i) in diskActions" :key="'d' + i" class="act">
                  <svg class="ic"><use :href="'#' + a[0]" /></svg><span>{{ a[1] }}</span>
                  <svg v-if="a[2]" class="ar"><use href="#t-r" /></svg>
                </button>
              </div>
              <div class="vbar"><svg class="ar"><use href="#c-u" /></svg><i class="thumb act-thumb"></i><svg class="ar end"><use href="#c-d" /></svg></div>
            </div>
          </div>
        </template>

        <div v-else class="sv">
          <div class="sv-main">
            <div class="sv-band"><svg class="ic"><use href="#gear" /></svg>Службы (локальные)</div>
            <div class="sv-row">
              <div class="sv-info">
                <h4>Диспетчер настройки устройств</h4>
                <p class="sv-run"><a href="#">Запустить</a> службу</p>
                <p>Описание:<br>Включение обнаружения,<br>скачивания и установки<br>программного обеспечения,<br>относящегося к устройствам. Если<br>эту службу отключить, то<br>устройства могут быть настроены<br>на использование устаревшего<br>программного обеспечения и<br>работать неправильно.</p>
              </div>
              <div class="sv-list">
                <div class="sv-top">
                  <table class="list">
                    <colgroup><col class="w137"><col class="w60"><col class="w67"><col class="w69"><col></colgroup>
                    <thead><tr><th>Имя<svg class="ar caret"><use href="#c-u" /></svg></th><th>Описание</th><th>Состояние</th><th>Тип запуска</th><th>Вход от имени</th></tr></thead>
                    <tbody>
                      <tr v-for="(s, i) in services" :key="i" :class="{ hot: s[5] }"><td><svg class="ic"><use :href="s[5] ? '#gearb' : '#gear'" /></svg>{{ s[0] }}</td><td>{{ s[1] }}</td><td>{{ s[2] }}</td><td>{{ s[3] }}</td><td>{{ s[4] }}</td></tr>
                    </tbody>
                  </table>
                  <div class="vbar"><svg class="ar"><use href="#c-u" /></svg><i class="thumb sv-thumb"></i><svg class="ar end"><use href="#c-d" /></svg></div>
                </div>
                <div class="hbar"><svg class="ar"><use href="#c-l" /></svg><i class="thumb svh-thumb"></i><svg class="ar end"><use href="#c-r" /></svg></div>
              </div>
            </div>
          </div>
          <div class="sv-tabs"><button class="cur">Расширенный</button><button>Стандартный</button></div>
        </div>
      </div>
      <footer v-if="w.id !== 'scheduler'" class="status"><i></i><i></i><i></i></footer>
    </section>

    <!-- Explorer -->
    <section class="win explorer">
      <header class="ex-title">Администрирование</header>
      <nav class="ex-menu"><button>Поделиться</button><button>Вид</button></nav>
      <div class="ex-bar">
        <div class="ex-path"><span class="ex-crumb">Все элемент...</span><svg class="ar"><use href="#c-r" /></svg><span>Администрирование</span><svg class="ar end"><use href="#c-d" /></svg></div>
        <button class="ex-reload" aria-label="Обновить"><svg class="ar"><use href="#reload" /></svg></button>
        <input type="text" class="ex-search" aria-label="Поиск">
      </div>
      <div class="ex-body">
        <aside class="ex-nav"><i class="ex-sel"></i><svg v-for="n in 4" :key="n" class="ic"><use href="#pin" /></svg></aside>
        <div class="ex-main">
          <table class="list">
            <colgroup><col class="w230"><col></colgroup>
            <thead><tr><th>Имя<svg class="ar caret"><use href="#c-u" /></svg></th><th>Дата изменения</th></tr></thead>
            <tbody><tr v-for="(a, i) in adminTools" :key="i"><td><svg class="ic"><use :href="'#' + a[0]" /></svg>{{ a[1] }}</td><td>07.12.2019 12:08</td></tr></tbody>
          </table>
          <div class="hbar"><svg class="ar"><use href="#c-l" /></svg><i class="thumb ex-thumb"></i></div>
        </div>
      </div>
      <footer class="ex-status"><span>Элементов: 20</span></footer>
    </section>

    <!-- Service properties -->
    <section class="win dialog">
      <header class="dg-title">Свойства: Диспетчер настройки устройств (Локальный компь...</header>
      <div class="tabs"><button class="cur">Общие</button><button>Вход в систему</button><button>Восстановление</button><button>Зависимости</button></div>
      <div class="dg-page">
        <div class="dg-grid">
          <label for="d-name">Имя службы:</label><span><output id="d-name">DsmSvc</output></span>
          <span class="dg-two">Отображаемое имя:</span><span class="dg-two">Диспетчер настройки устройств</span>
          <span class="dg-top">Описание:</span>
          <div class="dg-desc">
            <p>Включение обнаружения, скачивания и<br>установки программного обеспечения,<br>относящегося к устройствам. Если эту<br>службу отключить, то устройства могут быть</p>
            <div class="vbar"><svg class="ar"><use href="#c-u" /></svg><i class="thumb ev-thumb"></i><svg class="ar end"><use href="#c-d" /></svg></div>
          </div>
        </div>
        <p class="dg-file">Исполняемый файл:</p>
        <p class="dg-exe">C:\Windows\system32\svchost.exe -k netsvcs -p</p>
        <div class="dg-line"><label for="d-type">Тип запуска:</label><div class="sel"><select id="d-type"><option>Вручную</option></select><svg class="ar"><use href="#c-d" /></svg></div></div>
        <hr>
        <div class="dg-line state"><span>Состояние:</span><span>Остановлена</span></div>
        <div class="dg-btns"><button class="btn">Запустить</button><button class="btn" disabled>Остановить</button><button class="btn" disabled>Приостановить</button><button class="btn" disabled>Продолжить</button></div>
        <p class="dg-hint">Вы можете указать параметры запуска, применяемые при<br>запуске службы из этого диалогового окна.</p>
        <div class="dg-args"><label for="d-args">Параметры запуска:</label><input id="d-args" type="text"></div>
      </div>
      <footer class="dg-foot"><button class="btn main">ОК</button><button class="btn">Отмена</button><button class="btn" disabled>Применить</button></footer>
    </section>
  </main>
</template>

<style>
html, body { margin: 0; background: #000; }
</style>

<style scoped>
.desktop { position: relative; width: 100%; height: calc(100vh - 1px); overflow: hidden; background: #000; color: #0c0c0c; font: 9px/12px Roboto, "Open Sans", sans-serif; }
.desktop * { box-sizing: border-box; }
.sprite { position: absolute; width: 0; height: 0; }
button, input, select, textarea { font: inherit; color: inherit; padding: 0; margin: 0; border: 0; background: none; border-radius: 0; appearance: none; outline: 0; }
button { white-space: nowrap; }
h1, h2, h3, h4, p { margin: 0; font-weight: 400; }
i { font-style: normal; display: block; }
.ic, .ar { width: 12px; height: 12px; flex: none; display: block; }
.ar { color: #444; }
.dim { color: #999; }
.end { margin-left: auto; }

.win { position: absolute; display: flex; flex-direction: column; overflow: hidden; background: #fff; border: 1px solid #a4a8ac; }
.registry { left: -20px; top: 685px; width: 525px; height: 380px; }
.autoplay { left: 1421px; top: 499px; width: 540px; height: 453px; }
.settings { left: 1420px; top: 21px; width: 490px; height: 429px; flex-direction: row; font-family: "Open Sans", "Noto Sans", sans-serif; }
.computer { left: -4px; top: 390px; width: 596px; height: 310px; }
.policy { left: 2px; top: -1px; width: 591px; height: 425px; z-index: 3; }
.scheduler { left: 591px; top: 628px; width: 750px; height: 440px; }
.events { left: 874px; top: 14px; width: 660px; height: 413px; z-index: 3; }
.services { left: 898px; top: 428px; width: 652px; height: 445px; z-index: 4; }
.explorer { left: 466px; top: 50px; width: 522px; height: 454px; z-index: 2; }
.dialog { left: 1634px; top: 204px; width: 300px; height: 352px; z-index: 5; background: #f0f0f0; }

/* console chrome */
.title { display: flex; align-items: center; gap: 4px; height: 22px; padding: 0 0 0 5px; color: #8e8e8e; }
.caption { margin-left: auto; display: flex; }
.caption button { width: 34px; display: flex; justify-content: center; }
.menu { display: flex; gap: 11px; height: 17px; padding: 1px 0 0 6px; border-bottom: 1px solid #d9d9d9; }
.tools { display: flex; height: 19px; padding-top: 1px; color: #8a8a8a; }
.tools.blue { color: #2a9de0; }
.tools button { width: 17px; height: 18px; display: flex; align-items: center; justify-content: center; }
.tools button.on { background: #cce6fb; }
.sep { width: 1px; height: 14px; margin: 2px 3px; background: #b4b4b4; }
.body { flex: 1; min-height: 0; display: flex; gap: 3px; background: #f0f0f0; border-top: 3px solid #f0f0f0; }
.tree, .pane { display: flex; flex-direction: column; border: 1px solid #9a9fa5; background: #fff; min-width: 0; }
.tree { flex: none; }
.policy .tree { width: 182px; }
.computer .tree { width: 142px; }
.events .tree { width: 147px; }
.services .tree { width: 92px; }
.scheduler .tree { width: 135px; }
.tree-main { flex: 1; min-height: 0; display: flex; }
.rows { flex: 1; min-width: 0; overflow: hidden; padding: 1px 0 0 1px; }
.row { display: flex; height: 13px; }
.row:nth-child(even) { height: 14px; }
.step { width: 14px; flex: none; }
.step .ar, .guide .ar { margin: 1px 0 0; }
.node { display: flex; align-items: center; gap: 4px; padding: 0 4px 0 1px; white-space: nowrap; }
.picked { background: #d9d9d9; }
.hbar, .vbar { display: flex; flex: none; background: #f0f0f0; }
.hbar { height: 12px; }
.vbar { width: 12px; flex-direction: column; }
.vbar .end { margin: auto 0 0; }
.thumb { background: #cdcdcd; flex: none; }
.tree-thumb { height: 167px; }
.status { flex: none; display: flex; justify-content: flex-end; height: 17px; background: #f0f0f0; border-top: 1px solid #dcdcdc; }
.status i { width: 99px; border-left: 1px solid #dcdcdc; }
.status i:last-child { width: 2px; }
.status i:nth-child(2) { width: 64px; }

/* lists */
.list { width: 100%; table-layout: fixed; border-collapse: collapse; }
.list th, .list td { padding: 0 0 0 5px; white-space: nowrap; overflow: hidden; text-align: left; font-weight: 400; }
.list th { position: relative; height: 20px; border-right: 1px solid #e2e2e2; }
.events .list th { height: 18px; }
.list tbody tr { height: 14px; line-height: 14px; }
.list tbody tr:nth-child(4n) { height: 15px; }
.list td:first-child { padding-left: 2px; }
.list td .ic { float: left; margin: 1px 2px 0 0; }
.list.strong th, .list.strong td { font-weight: 600; }
.list .num { text-align: right; padding-right: 4px; }
.list .hot td { background: #f0f0f0; }
.list .hot td.rest { background: none; }
.list .sorted { background: #d9ebf9; }
.caret { position: absolute; left: 50%; top: -4px; color: #999; }
.w45 { width: 45px; } .w55 { width: 55px; } .w60 { width: 60px; } .w67 { width: 67px; } .w69 { width: 69px; }
.w74 { width: 74px; } .w90 { width: 90px; } .w112 { width: 112px; } .w113 { width: 113px; } .w137 { width: 137px; } .w230 { width: 230px; } .w262 { width: 262px; }

/* policy */
.lp-list { flex: 1; flex-direction: row; }
.lp-clip { flex: 1; min-width: 0; overflow: hidden; padding-left: 1px; }
.lp-thumb { height: 70px; }

/* computer management */
.cm-list { width: 304px; flex: none; }
.cm-list .list { margin: 0 0 auto; }
.cm-thumb { width: 247px; }
.actions { flex: 1; min-width: 0; display: flex; flex-direction: column; background: #fff; border: solid #8c8c8c; border-width: 1px 0 0 2px; }
.actions h4 { height: 18px; padding: 3px 4px 0; font-weight: 600; background: #f0f0f0; }
.band { display: flex; justify-content: space-between; align-items: center; flex: none; height: 18px; padding: 0 3px 0 4px; background: linear-gradient(#b7cde5, #97b1d3); color: #15304f; }
.act { display: flex; align-items: center; gap: 6px; flex: none; width: 100%; height: 18px; padding: 0 2px 0 4px; text-align: left; }
.act span { flex: 1; }
.act.line { height: 19px; border-bottom: 1px solid #e3e3e3; }

/* scheduler */
.ts-mid { width: 382px; flex: none; display: flex; flex-direction: column; padding-right: 9px; }
.ts-list { height: 149px; flex: none; display: flex; flex-direction: column; background: #fff; border: 4px solid #8c8c8c; }
.ts-clip { flex: 1; min-height: 0; overflow: hidden; }
.ts-thumb { width: 91px; }
.ts-info { flex: 1; min-height: 0; display: flex; flex-direction: column; margin-top: 2px; border: solid #8c8c8c; border-width: 1px 0 0 4px; }
.tabs { display: flex; align-items: flex-end; flex: none; height: 16px; }
.tabs button { height: 14px; padding: 0 3px; border: 1px solid #dcdcdc; border-bottom: 0; background: #f0f0f0; }
.tabs .cur { height: 16px; padding: 0 5px; background: #fff; }
.ts-form { flex: 1; min-height: 0; display: flex; background: #fff; }
.ts-fields { flex: 1; min-width: 0; overflow: hidden; display: grid; grid-template-columns: 89px 1fr; align-content: start; padding: 6px 0 0 9px; }
.ts-fields > label, .ts-fields > span { padding-top: 2px; }
.t-box { height: 18px; padding-left: 2px; border: 1px solid #a9a9a9; border-right: 0; background: #f0f0f0; }
.t-flat { height: 20px; margin: 5px 0; padding-bottom: 7px; background: #f0f0f0; }
.ts-fields > label[for='t-place'] { padding-top: 7px; }
.ts-fields > .t-author, .ts-fields > span { height: 16px; }
.ts-fields > .t-author { padding-left: 2px; }
.ts-fields textarea { width: 100%; height: 67px; resize: none; border: 1px solid #a9a9a9; border-right: 0; background: #f0f0f0; }
fieldset { grid-column: 1 / 3; margin: 5px 0 0; padding: 6px 0 10px 2px; border: 1px solid #dcdcdc; border-right: 0; min-width: 0; overflow: hidden; }
legend { padding: 0 3px; margin-left: 1px; }
fieldset p { white-space: nowrap; padding-left: 4px; }
fieldset .account { margin: 3px 0 4px; background: #f0f0f0; }
.radio { display: flex; align-items: center; gap: 6px; white-space: nowrap; }
.radio input { width: 10px; height: 10px; border: 1px solid #c4c4c4; border-radius: 50%; }
.form-thumb { height: 154px; }
.ts-actions { justify-content: flex-end; padding-bottom: 24px; }
.ts-actions .band { margin: 3px 0 0; }

/* event viewer */
.ev-mid { width: 331px; flex: none; display: flex; flex-direction: column; border-left: 2px solid #8c8c8c; }
.ev-title { display: flex; gap: 12px; flex: none; height: 17px; padding: 2px 4px; background: #696969; color: #f4f4f4; font-weight: 600; }
.ev-list { height: 185px; flex: none; margin: 3px 2px 0 0; display: flex; flex-direction: column; background: #fff; border: solid #8c8c8c; border-width: 2px 2px 2px 1px; }
.ev-top { flex: 1; min-height: 0; display: flex; }
.ev-clip { flex: 1; min-width: 0; overflow: hidden; }
.ev-thumb { height: 13px; }
.evh-thumb { width: 276px; }
.ev-info { flex: 1; min-height: 0; margin: 3px 2px 0 0; padding: 0 2px 0 4px; border-top: 2px solid #8c8c8c; }
.ev-name { display: flex; justify-content: space-between; height: 16px; padding-top: 1px; border-bottom: 1px solid #a0a0a0; }
.ev-name button { width: 24px; font-weight: 700; }
.ev-info .tabs { margin: 6px 0 0 3px; }
.ev-box { margin: 0 6px 0 4px; height: 76px; display: flex; flex-direction: column; border: 1px solid #e0e0e0; padding: 1px; }
.ev-text { flex: 1; min-height: 0; display: flex; }
.ev-scroll { flex: 1; min-width: 0; padding: 11px 2px 0 6px; }
.ev-msg { height: 21px; overflow: hidden; white-space: nowrap; padding: 1px 0 0 1px; line-height: 11px; border: solid #777; border-width: 1px 0 0 1px; border-bottom: 1px solid #fff; }
.ev-scroll p { display: flex; gap: 9px; padding-top: 12px; }
.evt-thumb { width: 194px; }
.act-row { flex: 1; min-height: 0; display: flex; }
.act-list { flex: 1; min-width: 0; overflow: hidden; }
.act-list .band:not(:first-child) { margin-top: 4px; }
.act-thumb { height: 243px; }

/* services */
.services .status { height: 16px; }
.sv { flex: 1; min-width: 0; display: flex; flex-direction: column; }
.sv-main { flex: 1; min-height: 0; display: flex; flex-direction: column; background: #fff; border: solid #8c8c8c; border-width: 1px 0 1px 1px; }
.sv-band { display: flex; align-items: center; gap: 7px; flex: none; height: 20px; padding-left: 8px; background: #9bb4d2; color: #132c4c; }
.sv-row { flex: 1; min-height: 0; display: flex; }
.sv-info { width: 154px; flex: none; padding: 4px 0 0 3px; line-height: 11px; white-space: nowrap; }
.sv-info h4 { font-weight: 700; }
.sv-run { padding: 14px 0 24px; }
a { color: #0a66c9; }
.sv-list { flex: 1; min-width: 0; display: flex; flex-direction: column; margin-top: -7px; border-top-left-radius: 8px; background: #fff; }
.sv-top { flex: 1; min-height: 0; display: flex; padding-top: 6px; overflow: hidden; }
.sv-top .list { flex: 1; align-self: flex-start; width: 100%; }
.sv-list th:first-child, .sv-list td:first-child { padding-left: 6px; }
.sv-top .vbar .ar { margin-bottom: 67px; }
.sv-top .vbar .end { margin-bottom: 0; }
.sv-thumb { height: 21px; }
.svh-thumb { width: 331px; }
.sv-tabs { flex: none; height: 15px; display: flex; gap: 3px; padding-left: 3px; }
.sv-tabs button { position: relative; height: 14px; padding: 0 4px; border-bottom: 1px solid #777; }
.sv-tabs button::before, .sv-tabs button::after { content: ""; position: absolute; top: 0; bottom: 0; width: 3px; }
.sv-tabs button::before { left: -2px; border-left: 1px solid #777; transform: skewX(16deg); }
.sv-tabs button::after { right: -2px; border-right: 1px solid #777; transform: skewX(-16deg); }
.sv-tabs .cur, .sv-tabs .cur::before, .sv-tabs .cur::after { background: #fff; }

/* registry */
.reg-path { height: 17px; padding: 2px 4px; white-space: nowrap; }
.reg-body { flex: 1; min-height: 0; display: flex; gap: 3px; border-top: 1px solid #777; background: #f0f0f0; }
.reg-tree { width: 145px; display: flex; background: #fff; border-right: 1px solid #9a9fa5; }
.reg-tree .rows { padding: 3px 0 0 22px; }
.reg-tree .node { gap: 3px; }
.guide { width: 12px; flex: none; background: radial-gradient(circle, #bbb 1px, transparent 1px) 0 0 / 12px 3px; }
.guide.bare { background: none; }
.reg-thumb { height: 110px; margin-top: auto; }
.reg-list { flex: 1; min-width: 0; background: #fff; border-left: 1px solid #9a9fa5; }
.reg-list .list th { height: 22px; }

/* explorer */
.ex-title { height: 22px; padding: 5px 0 0 91px; color: #9a9a9a; }
.ex-menu { display: flex; gap: 21px; height: 18px; padding: 0 0 0 103px; border-bottom: 1px solid #e2e2e2; color: #444; }
.ex-bar { display: flex; height: 31px; padding: 4px 0; }
.ex-path { display: flex; align-items: center; gap: 2px; width: 326px; padding: 0 5px 0 106px; border: 1px solid #d9d9d9; }
.ex-crumb { white-space: nowrap; }
.ex-reload { width: 26px; display: flex; align-items: center; justify-content: center; border: 1px solid #d9d9d9; border-left: 0; }
.ex-search { flex: 1; min-width: 0; margin-left: 9px; border: 1px solid #d9d9d9; }
.ex-body { flex: 1; min-height: 0; display: flex; }
.ex-nav { width: 156px; flex: none; padding: 12px 2px 0; display: flex; flex-direction: column; align-items: flex-end; gap: 8px; border-right: 1px solid #eee; }
.ex-nav .ic { width: 10px; height: 10px; margin-right: 1px; }
.ex-sel { width: 100%; height: 18px; background: #d9d9d9; margin-bottom: -3px; }
.ex-main { flex: 1; min-width: 0; display: flex; flex-direction: column; justify-content: space-between; }
.ex-main .list th { height: 24px; border: 0; color: #47608a; }
.ex-main .list th:first-child { padding-left: 13px; border-right: 1px solid #e2e2e2; }
.ex-main .list td:first-child { padding-left: 14px; }
.ex-main .list td:last-child { color: #6d6d6d; }
.ex-main .list tbody tr { height: 16px; line-height: 15px; }
.ex-main .list tbody tr:nth-child(4n) { height: 15px; }
.ex-main .list td .ic { margin-top: 2px; margin-right: 3px; }
.ex-thumb { width: 233px; }
.ex-status { height: 17px; padding: 2px 0 0 10px; color: #47608a; }
.ex-status span { display: inline-block; padding-right: 8px; border-right: 1px solid #eee; }

/* settings */
.set-nav { width: 173px; flex: none; background: #e6e6e6; padding: 77px 12px 0; }
.set-search { display: flex; align-items: center; height: 24px; border: 2px solid #999; background: #e6e6e6; padding-right: 4px; }
.set-search input { flex: 1; min-width: 0; }
.set-page { flex: 1; min-width: 0; position: relative; padding-left: 17px; font-size: 10px; line-height: 14px; color: #2b2b2b; }
.set-page .caption { height: 24px; align-items: center; justify-content: flex-end; }
.set-page h1 { margin: 16px 0 16px; font-size: 19px; line-height: 28px; }
.set-page p { width: 240px; }
.toggle { display: flex; align-items: center; gap: 9px; margin-top: 5px; }
.toggle input { width: 33px; height: 16px; border: 2px solid #333; border-radius: 8px; display: flex; align-items: center; padding-left: 3px; }
.toggle input::before { content: ""; width: 8px; height: 8px; border-radius: 50%; background: #333; }
.set-page h2 { margin: 27px 0 13px; width: 290px; font-size: 14px; line-height: 21px; }
.field { display: flex; flex-direction: column; gap: 5px; margin-bottom: 22px; }
.field select { height: 24px; width: 200px; padding-left: 6px; border: 2px solid #999; }
.set-page h3 { margin: 52px 0 5px; font-size: 14px; line-height: 20px; }
.set-page a { text-decoration: none; color: #0078d7; }
.set-scroll { position: absolute; right: 0; top: 84px; width: 2px; height: 120px; background: #8a8a8a; }

/* shared controls */
.sel { display: grid; align-items: center; }
.sel > * { grid-area: 1 / 1; }
.sel .ar { justify-self: end; margin-right: 2px; color: #666; }
.sel select { width: 100%; height: 18px; padding-left: 2px; border: 1px solid #b4b4b4; background: #e1e1e1; }
.sel.off select { padding-left: 5px; background: #ccc; border-color: #bbb; color: #777; opacity: 1; }
.sel.off .ar { color: #aaa; }
.sel.pale select { padding-left: 5px; color: #777; }
.btn { height: 17px; border: 1px solid #adadad; background: #e1e1e1; text-align: center; }
.btn:disabled { background: #ccc; border-color: #bfbfbf; color: #8c8c8c; }
.btn.main { border: 2px solid #1883d7; }

/* autoplay */
.ap-address { display: flex; align-items: center; gap: 2px; flex: none; height: 23px; margin-top: 26px; padding-left: 108px; border: solid #dcdcdc; border-width: 1px 0; }
.ap-page { flex: 1; min-height: 0; overflow: hidden; padding: 17px 58px 0 45px; }
.ap-head { position: relative; }
.ap-head h2 { white-space: nowrap; font-size: 12px; line-height: 16px; font-weight: 600; color: #2847a6; }
.ap-help { position: absolute; left: 441px; top: 0; width: 13px; height: 13px; border-radius: 50%; background: #0f6fc6; color: #fff; font-weight: 700; }
.ap-all { display: flex; align-items: center; gap: 4px; margin: 10px 0 25px; height: 12px; }
.ap-all input { width: 9px; height: 9px; border: 1px solid #555; }
.ap-line { display: flex; align-items: center; }
.ap-label { width: 173px; padding-left: 28px; display: flex; align-items: center; gap: 3px; white-space: nowrap; }
.ap-line .sel { width: 264px; }
.ap-line.top { height: 45px; margin-right: -58px; border-top: 1px solid #dcdcdc; }
.ap-note { padding: 0 0 7px 16px; margin-top: -2px; }
.ap-line.sub { height: 22px; }
.ap-line.sub .ap-label { padding-left: 62px; }
.ap-line.card { height: 43px; margin: 26px -58px 0 0; border-top: 1px solid #c4c4c4; }
.ap-line.card .ap-label { padding-left: 18px; }
.ap-group { display: flex; align-items: center; gap: 3px; margin: 13px -58px 6px 0; }
.ap-group::after { content: ""; flex: 1; height: 1px; background: #e0e0e0; }
.ap-line.dvd { height: 22px; }
.ap-line.dvd .ap-label { padding-left: 8px; }
.ap-foot { flex: none; display: flex; justify-content: flex-end; gap: 6px; height: 32px; padding: 7px 42px 0 0; background: #f0f0f0; border-top: 1px solid #dcdcdc; }
.ap-foot .btn { width: 57px; }
.ap-foot .btn.main { width: 69px; }

/* service properties */
.dg-title { flex: none; height: 23px; padding: 5px; background: #fff; white-space: nowrap; }
.dialog .tabs { margin: 5px 0 0 4px; }
.dg-page { flex: none; height: 280px; margin-left: 4px; padding: 6px 16px 0 11px; background: #fff; border: 1px solid #dcdcdc; border-top: 0; border-right: 0; line-height: 10px; }
.dg-grid { display: grid; grid-template-columns: 68px 1fr; align-items: center; row-gap: 4px; }
.dg-grid > * { padding-left: 2px; }
.dg-grid > :nth-child(odd) { padding-left: 0; }
.dg-two { margin-top: 2px; }
output { background: #0078d7; color: #fff; display: inline-block; }
.dg-top { align-self: start; padding-top: 5px; }
.dg-desc { display: flex; justify-content: space-between; height: 40px; overflow: hidden; border: solid #a0a0a0; border-width: 1px 0 0 1px; white-space: nowrap; }
.dg-file { margin-top: 6px; }
.dg-exe { padding: 7px 2px 9px; }
.dg-line { display: grid; grid-template-columns: 68px 1fr; align-items: center; }
.dg-page hr { margin: 11px 0 9px; border: 0; border-top: 1px solid #a0a0a0; }
.dg-btns { display: flex; justify-content: space-between; margin: 9px 0 9px; }
.dg-btns .btn { width: 62px; }
.dg-btns .btn:nth-child(3) { width: 68px; }
.dg-args { display: flex; align-items: center; gap: 3px; margin-top: 8px; white-space: nowrap; }
.dg-args label { flex: none; }
.dg-args input { flex: 1; min-width: 0; height: 18px; border: 1px solid #7a7a7a; background: #fff; }
.dg-foot { display: flex; gap: 6px; padding: 6px 0 0 121px; }
.dg-foot .btn { width: 55px; flex: none; }
.dg-foot .btn:last-child { width: 62px; }
</style>
